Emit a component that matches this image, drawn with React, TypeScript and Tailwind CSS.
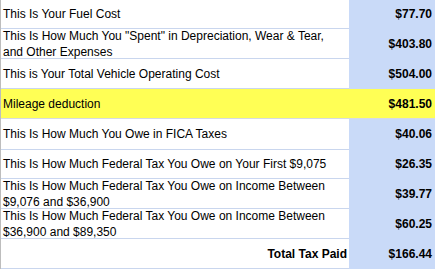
const rows: { label: string; value: string; h: string; yellow?: boolean; right?: boolean }[] = [
  { label: "This Is Your Fuel Cost", value: "$77.70", h: "h-[30px]" },
  { label: 'This Is How Much You "Spent" in Depreciation, Wear & Tear, and Other Expenses', value: "$403.80", h: "h-[30px]" },
  { label: "This is Your Total Vehicle Operating Cost", value: "$504.00", h: "h-[30px]" },
  { label: "Mileage deduction", value: "$481.50", h: "h-[30px]", yellow: true },
  { label: "This Is How Much You Owe in FICA Taxes", value: "$40.06", h: "h-[31px]" },
  { label: "This Is How Much Federal Tax You Owe on Your First $9,075", value: "$26.35", h: "h-[29px]" },
  { label: "This Is How Much Federal Tax You Owe on Income Between $9,076 and $36,900", value: "$39.77", h: "h-[30px]" },
  { label: "This Is How Much Federal Tax You Owe on Income Between $36,900 and $89,350", value: "$60.25", h: "h-[30px]" },
  { label: "Total Tax Paid", value: "$166.44", h: "h-[30px]", right: true },
];

export default function App() {
  return (
    <div className="w-[435px] h-[270px] overflow-hidden bg-white font-['Liberation_Sans',Arial,sans-serif] text-black">
      <div className="border-l border-[#bdbdbd]">
        {rows.map((r, i) => (
          <div key={i} className={`flex text-[12px] leading-[16px] ${r.h} ${i === 0 ? "-mt-px" : ""}`}>
            <div
              className={`w-[348px] flex items-center pl-[2px] pr-[20px] border-b ${
                r.yellow ? "bg-[#ffff55] border-[#d6dbe4]" : "border-[#c9d6ee]"
              } ${r.right ? "justify-end font-bold !pr-[2px]" : ""}`}
            >
              <span>{r.label}</span>
            </div>
            <div
              className={`flex-1 flex items-center justify-end pr-[3px] font-bold border-b ${
                r.yellow ? "bg-[#ffff55] border-[#d6dbe4]" : "bg-[#c9daf8] border-[#c9daf8]"
              }`}
            >
              {r.value}
            </div>
          </div>
        ))}
      </div>
    </div>
  );
}
